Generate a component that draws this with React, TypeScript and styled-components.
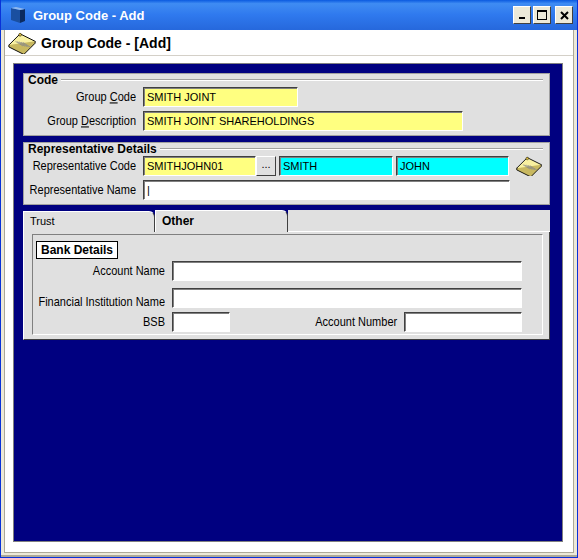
import React from "react";
import styled, { createGlobalStyle } from "styled-components";

const G = createGlobalStyle`
  html,body{margin:0;padding:0;background:#fff;}
  body{font-family:"Liberation Sans",Arial,sans-serif;font-size:11px;}
`;
const Win = styled.div`
  width:578px;height:558px;box-sizing:border-box;background:#ece9d8;
  border:1px solid #0831d9;border-top:none;display:flex;flex-direction:column;
  padding:0 3px 4px 3px;box-shadow:inset 0 -2px 0 #aca899;
`;
const Title = styled.div`
  height:30px;margin:0 -3px;display:flex;align-items:center;padding:0 4px 0 8px;gap:6px;
  background:linear-gradient(180deg,#0a5ae0 0%,#3f8cf3 12%,#2f79ee 50%,#2668dc 100%);
  color:#fff;font-family:"Liberation Sans",Arial,sans-serif;font-weight:bold;font-size:13px;
`;
const TBtns = styled.div`margin-left:auto;display:flex;gap:2px;`;
const TBtn = styled.div`
  width:16px;height:16px;background:#ece9d8;border:1px solid;border-color:#fff #404040 #404040 #fff;
  display:flex;align-items:center;justify-content:center;margin-left:${p=>p.$gap?"2px":"0"};
`;
const Body = styled.div`
  flex:1;background:#fff;display:flex;flex-direction:column;
  border:1px solid #aca899;border-top:none;
`;
const Header = styled.div`
  height:25px;display:flex;align-items:center;gap:4px;padding-left:2px;
  font-weight:bold;font-size:14px;border-bottom:1px solid #d4d0c8;
`;
const Canvas = styled.div`
  flex:1;margin:7px 10px 10px 8px;background:#000080;border:1px solid #808080;
  padding:9px 12px 0 9px;display:flex;flex-direction:column;gap:6px;
`;
const Group = styled.div`
  background:#e0e0e0;border:1px solid #a0a0a0;padding:0 6px 2px 4px;
`;
const Legend = styled.div`
  font-weight:bold;font-size:12px;height:11px;display:flex;align-items:center;gap:3px;
  &::after{content:"";flex:1;border-top:1px solid #a0a0a0;border-bottom:1px solid #fff;}
`;
const Row = styled.div`display:flex;align-items:center;height:24px;gap:3px;`;
const Label = styled.div`
  width:${p=>p.$w||108}px;text-align:right;font-size:11px;color:#000;padding-right:4px;flex-shrink:0;
  transform:scaleY(1.08);
`;
const Input = styled.div`
  width:${p=>p.$w}px;height:20px;box-sizing:border-box;background:${p=>p.$bg||"#fff"};
  border:1px solid;border-color:#404040 #fff #fff #404040;box-shadow:inset 1px 1px 0 #808080;
  padding:3px 3px 0;font-size:11px;white-space:nowrap;overflow:hidden;
`;
const Dots = styled.div`
  width:20px;height:20px;box-sizing:border-box;background:#e0e0e0;border:1px solid;
  border-color:#fff #404040 #404040 #fff;text-align:center;line-height:14px;margin-left:-3px;
`;
const Tabs = styled.div`display:flex;height:22px;align-items:flex-end;margin-top:-1px;`;
const Tab = styled.div`
  width:${p=>p.$w}px;height:${p=>p.$sel?22:21}px;box-sizing:border-box;background:#e0e0e0;
  border:1px solid;border-bottom:none;border-color:#fff #404040 transparent #fff;border-radius:0 6px 0 0;
  padding:3px 6px;font-weight:${p=>p.$sel?"bold":"normal"};font-size:${p=>p.$sel?12:11}px;
`;
const Strip = styled.div`flex:1;height:22px;background:#e0e0e0;border-bottom:1px solid #fff;box-sizing:border-box;`;
const Panel = styled.div`
  background:#e0e0e0;border:1px solid;border-color:#fff #404040 #404040 #fff;padding:2px 6px 4px 8px;
  margin-top:-1px;
`;
const Inner = styled.div`
  border:1px solid;border-color:#808080 #fff #fff #808080;padding:6px 20px 0 3px;
  display:flex;flex-direction:column;gap:2px;
`;
const BoxLabel = styled.div`
  align-self:flex-start;border:1px solid #000;background:#fff;font-weight:bold;font-size:12px;padding:1px 4px;
`;

const Notebook = ({size=30}:{size?:number}) => (
  <svg width={size} height={size*0.75} viewBox="0 0 32 24">
    <path d="M2 15 L14 3 L30 11 L18 23 Z" fill="#f8f0a0" stroke="#000" strokeWidth="1"/>
    <path d="M2 15 L2 17 L18 25 L30 13 L30 11" fill="#c8b860" stroke="#000" strokeWidth="1"/>
    {[0,1,2,3,4].map(i=><line key={i} x1={9+i*2} y1={11+i*0.3} x2={17+i*2} y2={16+i*0.3} stroke="#888" strokeWidth="0.8"/>)}
    <circle cx="14" cy="4" r="1.5" fill="#e0c040" stroke="#000" strokeWidth="0.5"/>
  </svg>
);

export default function App(){
  return <>
    <G/>
    <Win>
      <Title>
        <svg width="18" height="18" viewBox="0 0 18 18"><path d="M2 2 L11 4 L11 17 L2 14 Z" fill="#1a4fa0"/><path d="M11 4 L16 3 L16 15 L11 17Z" fill="#0b2a60"/><path d="M2 2 L7 1 L16 3 L11 4Z" fill="#8fb8ee"/></svg>
        <span>Group Code - Add</span>
        <TBtns>
          <TBtn><svg width="8" height="8"><rect x="1" y="6" width="6" height="2" fill="#000"/></svg></TBtn>
          <TBtn><svg width="10" height="10"><rect x="0.5" y="0.5" width="9" height="9" fill="none" stroke="#000"/><rect x="0" y="0" width="10" height="2" fill="#000"/></svg></TBtn>
          <TBtn $gap><svg width="9" height="9"><path d="M1 1L8 8M8 1L1 8" stroke="#000" strokeWidth="2"/></svg></TBtn>
        </TBtns>
      </Title>
      <Body>
        <Header><Notebook/>Group Code - [Add]</Header>
        <Canvas>
          <Group>
            <Legend>Code</Legend>
            <Row><Label>Group <u>C</u>ode</Label><Input $w={155} $bg="#ffff80">SMITH JOINT</Input></Row>
            <Row><Label>Group <u>D</u>escription</Label><Input $w={320} $bg="#ffff80">SMITH JOINT SHAREHOLDINGS</Input></Row>
          </Group>
          <Group>
            <Legend>Representative Details</Legend>
            <Row><Label>Representative Code</Label><Input $w={114} $bg="#ffff80">SMITHJOHN01</Input><Dots>...</Dots>
              <Input $w={115} $bg="#00ffff">SMITH</Input><Input $w={114} $bg="#00ffff">JOHN</Input>
              <span style={{marginLeft:3}}><Notebook size={28}/></span></Row>
            <Row><Label>Representative Name</Label><Input $w={367}>|</Input></Row>
          </Group>
          <div>
            <Tabs><Tab $w={132}>Trust</Tab><Tab $w={133} $sel>Other</Tab><Strip/></Tabs>
            <Panel><Inner>
              <BoxLabel>Bank Details</BoxLabel>
              <Row style={{height:20}}><Label $w={129}>Account Name</Label><Input $w={352}/></Row>
              <Row style={{height:25,alignItems:"flex-end"}}><Label $w={129}>Financial Institution Name</Label><Input $w={352}/></Row>
              <Row><Label $w={129}>BSB</Label><Input $w={61}/><Label $w={164}>Account Number</Label><Input $w={124}/></Row>
            </Inner></Panel>
          </div>
        </Canvas>
      </Body>
    </Win>
  </>;
}
